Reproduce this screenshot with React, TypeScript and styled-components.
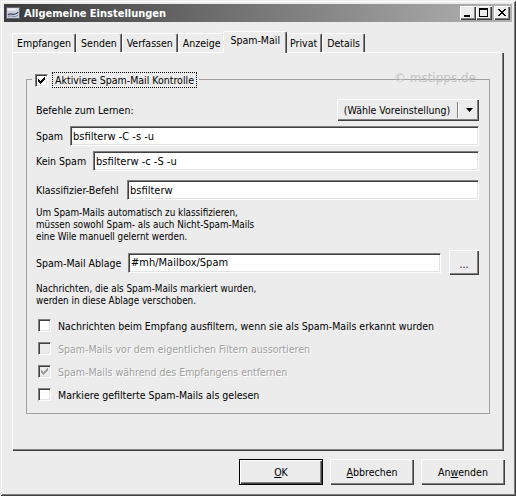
import React from "react";
import styled, { createGlobalStyle, css } from "styled-components";

const FONT = `"DejaVu Sans Condensed", "DejaVu Sans", "Liberation Sans", sans-serif`;

const GlobalStyle = createGlobalStyle`
  html, body { margin: 0; padding: 0; background: #ececec; }
  body { font-family: ${FONT}; font-size: 10.5px; color: #000; }
  * { box-sizing: border-box; }
`;

const raised = css`
  background: #ececec;
  box-shadow: inset 1px 1px #fff, inset -1px -1px #404040, inset -2px -2px #808080;
`;

const sunken = css`
  border: 1px solid;
  border-color: #808080 #fff #fff #808080;
  box-shadow: inset 1px 1px #404040, inset -1px -1px #e3e3e3;
`;

const Window = styled.div`
  width: 516px;
  height: 496px;
  padding: 4px;
  display: flex;
  flex-direction: column;
  background: #ececec;
  box-shadow: inset 1px 1px #ececec, inset -1px -1px #404040, inset 2px 2px #fff,
    inset -2px -2px #808080;
`;

const TitleBar = styled.div`
  height: 18px;
  display: flex;
  align-items: center;
  padding: 0 2px 0 1px;
  background: linear-gradient(to right, #3b3b3b, #b3b3b3);
`;

const TitleText = styled.span`
  flex: 1;
  margin-left: 3px;
  color: #fff;
  font-weight: bold;
  font-size: 11px;
  white-space: nowrap;
`;

const CaptionGroup = styled.div`
  display: flex;
  align-items: center;
`;

const CaptionButton = styled.div<{ $gap?: boolean }>`
  ${raised};
  width: 16px;
  height: 14px;
  margin-left: ${(p) => (p.$gap ? "2px" : "0")};
  display: flex;
`;

const Body = styled.div`
  flex: 1;
  display: flex;
  flex-direction: column;
  padding: 9px 7px 0 8px;
`;

const TabStrip = styled.div`
  height: 21px;
  display: flex;
  align-items: flex-end;
  position: relative;
  z-index: 1;
`;

const Tab = styled.div<{ $active?: boolean }>`
  height: ${(p) => (p.$active ? "22px" : "19px")};
  margin: ${(p) => (p.$active ? "0 -2px -1px -2px" : "0")};
  padding: ${(p) => (p.$active ? "2px 6px 0 6px" : "3px 4px 0 4px")};
  background: #ececec;
  border-top: 1px solid #fff;
  border-left: 1px solid #fff;
  border-right: 1px solid #404040;
  border-radius: 2px 2px 0 0;
  box-shadow: inset -1px 0 #808080;
  white-space: nowrap;
  position: relative;
  z-index: ${(p) => (p.$active ? 2 : 1)};
`;

const Panel = styled.div`
  height: 399px;
  margin-right: 1px;
  display: flex;
  flex-direction: column;
  padding: 27px 14px 37px 14px;
  box-shadow: inset 1px 1px #fff, inset -1px -1px #404040, inset -2px -2px #808080;
`;

const Group = styled.div`
  flex: 1;
  position: relative;
  border: 1px solid #a0a0a0;
  padding: 19px 10px 0 9px;
  display: flex;
  flex-direction: column;
`;

const Legend = styled.div`
  position: absolute;
  top: -8px;
  left: 5px;
  height: 16px;
  padding: 0 2px 0 3px;
  background: #ececec;
  display: flex;
  align-items: center;
  gap: 4px;
`;

const FocusLabel = styled.span`
  padding: 1px 2px;
  border: 1px dotted #000;
  white-space: nowrap;
`;

const Watermark = styled.span`
  position: absolute;
  top: -9px;
  right: 13px;
  color: #c2c2c2;
  font-family: "DejaVu Sans", sans-serif;
  font-size: 12px;
  pointer-events: none;
`;

const LearnRow = styled.div`
  height: 22px;
  display: flex;
  align-items: center;
  justify-content: space-between;
`;

const Dropdown = styled.div`
  ${raised};
  width: 142px;
  height: 22px;
  display: flex;
  align-items: center;
`;

const DropText = styled.span`
  flex: 1;
  text-align: center;
  white-space: nowrap;
`;

const DropSep = styled.span`
  width: 2px;
  height: 16px;
  border-left: 1px solid #808080;
  border-right: 1px solid #fff;
`;

const DropArrow = styled.span`
  width: 20px;
  display: flex;
  justify-content: center;
`;

const FieldRow = styled.div<{ $mt: number; $h?: number }>`
  margin-top: ${(p) => p.$mt}px;
  height: ${(p) => p.$h ?? 20}px;
  display: flex;
  align-items: center;
`;

const FieldLabel = styled.span<{ $w: number }>`
  width: ${(p) => p.$w}px;
  flex-shrink: 0;
  white-space: nowrap;
`;

const TextInput = styled.input`
  ${sunken};
  flex: 1;
  min-width: 0;
  height: 20px;
  padding: 0 2px;
  background: #fff;
  font-family: ${FONT};
  font-size: 11px;
  color: #000;
  outline: none;
`;

const SmallButton = styled.div`
  ${raised};
  width: 30px;
  height: 25px;
  margin-left: 8px;
  display: flex;
  align-items: center;
  justify-content: center;
  padding-top: 2px;
`;

const Hint = styled.div<{ $mt: number }>`
  margin-top: ${(p) => p.$mt}px;
  font-size: 9.8px;
  line-height: 12px;
  white-space: nowrap;
`;

const CheckList = styled.div`
  margin-top: 7px;
  display: flex;
  flex-direction: column;
`;

const CheckRow = styled.div`
  height: 23px;
  display: flex;
  align-items: center;
  padding-left: 2px;
  gap: 7px;
`;

const CheckText = styled.span<{ $disabled?: boolean }>`
  white-space: nowrap;
  color: ${(p) => (p.$disabled ? "#a0a0a0" : "#000")};
  text-shadow: ${(p) => (p.$disabled ? "1px 1px #fff" : "none")};
`;

const Box = styled.span<{ $disabled?: boolean }>`
  ${sunken};
  width: 13px;
  height: 13px;
  flex-shrink: 0;
  display: flex;
  align-items: center;
  justify-content: center;
  background: ${(p) => (p.$disabled ? "#ececec" : "#fff")};
`;

const ButtonRow = styled.div`
  margin-top: 8px;
  display: flex;
  justify-content: flex-end;
  gap: 7px;
`;

const PushButton = styled.div<{ $default?: boolean }>`
  width: 84px;
  height: 26px;
  display: flex;
  align-items: center;
  justify-content: center;
  background: #ececec;
  box-shadow: inset 1px 1px #fff, inset -1px -1px #404040, inset -2px -2px #808080;
  border: ${(p) => (p.$default ? "1px solid #000" : "none")};
`;

const CheckMark: React.FC<{ color: string }> = ({ color }) => (
  <svg width="7" height="7" viewBox="0 0 7 7" shapeRendering="crispEdges">
    {[
      [0, 2],
      [1, 3],
      [2, 4],
      [3, 3],
      [4, 2],
      [5, 1],
      [6, 0],
    ].map(([x, y]) => (
      <rect key={x} x={x} y={y} width="1" height="3" fill={color} />
    ))}
  </svg>
);

const CheckBox: React.FC<{ checked?: boolean; disabled?: boolean }> = ({ checked, disabled }) => (
  <Box $disabled={disabled}>{checked && <CheckMark color={disabled ? "#a0a0a0" : "#000"} />}</Box>
);

const TitleIcon = () => (
  <svg width="16" height="16" viewBox="0 0 16 16">
    <rect x="1.5" y="2.5" width="13" height="11" fill="#c9ced8" stroke="#5e6472" />
    <rect x="2.5" y="3.5" width="11" height="2" fill="#eef0f4" />
    <path d="M3 10 C6 6, 9 13, 13 7" stroke="#3c4a6a" strokeWidth="1.3" fill="none" />
    <path d="M3 12 C6 9, 9 14, 13 10" stroke="#7d8aa8" strokeWidth="1" fill="none" />
  </svg>
);

const MinGlyph = () => (
  <svg width="16" height="14" shapeRendering="crispEdges">
    <rect x="4" y="9" width="6" height="2" fill="#000" />
  </svg>
);

const MaxGlyph = () => (
  <svg width="16" height="14" shapeRendering="crispEdges">
    <rect x="3" y="2" width="9" height="2" fill="#000" />
    <rect x="3" y="2" width="1" height="9" fill="#000" />
    <rect x="11" y="2" width="1" height="9" fill="#000" />
    <rect x="3" y="10" width="9" height="1" fill="#000" />
  </svg>
);

const CloseGlyph = () => (
  <svg width="16" height="14" shapeRendering="crispEdges">
    {Array.from({ length: 7 }).map((_, i) => (
      <React.Fragment key={i}>
        <rect x={4 + i} y={3 + i} width="2" height="1" fill="#000" />
        <rect x={10 - i} y={3 + i} width="2" height="1" fill="#000" />
      </React.Fragment>
    ))}
  </svg>
);

const tabs = ["Empfangen", "Senden", "Verfassen", "Anzeige", "Spam-Mail", "Privat", "Details"];

export default function App() {
  return (
    <>
      <GlobalStyle />
      <Window>
        <TitleBar>
          <TitleIcon />
          <TitleText>Allgemeine Einstellungen</TitleText>
          <CaptionGroup>
            <CaptionButton>
              <MinGlyph />
            </CaptionButton>
            <CaptionButton>
              <MaxGlyph />
            </CaptionButton>
            <CaptionButton $gap>
              <CloseGlyph />
            </CaptionButton>
          </CaptionGroup>
        </TitleBar>
        <Body>
          <TabStrip>
            {tabs.map((t) => (
              <Tab key={t} $active={t === "Spam-Mail"}>
                {t}
              </Tab>
            ))}
          </TabStrip>
          <Panel>
            <Group>
              <Legend>
                <CheckBox checked />
                <FocusLabel>Aktiviere Spam-Mail Kontrolle</FocusLabel>
              </Legend>
              <Watermark>© mstipps.de</Watermark>
              <LearnRow>
                <span>Befehle zum Lernen:</span>
                <Dropdown>
                  <DropText>(Wähle Voreinstellung)</DropText>
                  <DropSep />
                  <DropArrow>
                    <svg width="7" height="4" viewBox="0 0 7 4">
                      <path d="M0 0H7L3.5 4Z" fill="#000" />
                    </svg>
                  </DropArrow>
                </Dropdown>
              </LearnRow>
              <FieldRow $mt={5}>
                <FieldLabel $w={34}>Spam</FieldLabel>
                <TextInput readOnly defaultValue="bsfilterw -C -s -u" />
              </FieldRow>
              <FieldRow $mt={5}>
                <FieldLabel $w={57}>Kein Spam</FieldLabel>
                <TextInput readOnly defaultValue="bsfilterw -c -S -u" />
              </FieldRow>
              <FieldRow $mt={9}>
                <FieldLabel $w={91}>Klassifizier-Befehl</FieldLabel>
                <TextInput readOnly defaultValue="bsfilterw" />
              </FieldRow>
              <Hint $mt={7}>
                Um Spam-Mails automatisch zu klassifizieren,
                <br />
                müssen sowohl Spam- als auch Nicht-Spam-Mails
                <br />
                eine Wile manuell gelernt werden.
              </Hint>
              <FieldRow $mt={7} $h={25}>
                <FieldLabel $w={92}>Spam-Mail Ablage</FieldLabel>
                <TextInput readOnly defaultValue="#mh/Mailbox/Spam" />
                <SmallButton>...</SmallButton>
              </FieldRow>
              <Hint $mt={8}>
                Nachrichten, die als Spam-Mails markiert wurden,
                <br />
                werden in diese Ablage verschoben.
              </Hint>
              <CheckList>
                <CheckRow>
                  <CheckBox />
                  <CheckText>Nachrichten beim Empfang ausfiltern, wenn sie als Spam-Mails erkannt wurden</CheckText>
                </CheckRow>
                <CheckRow>
                  <CheckBox disabled />
                  <CheckText $disabled>Spam-Mails vor dem eigentlichen Filtern aussortieren</CheckText>
                </CheckRow>
                <CheckRow>
                  <CheckBox checked disabled />
                  <CheckText $disabled>Spam-Mails während des Empfangens entfernen</CheckText>
                </CheckRow>
                <CheckRow>
                  <CheckBox />
                  <CheckText>Markiere gefilterte Spam-Mails als gelesen</CheckText>
                </CheckRow>
              </CheckList>
            </Group>
          </Panel>
          <ButtonRow>
            <PushButton $default>
              <span>
                <u>O</u>K
              </span>
            </PushButton>
            <PushButton>
              <span>
                <u>A</u>bbrechen
              </span>
            </PushButton>
            <PushButton>
              <span>
                An<u>w</u>enden
              </span>
            </PushButton>
          </ButtonRow>
        </Body>
      </Window>
    </>
  );
}
